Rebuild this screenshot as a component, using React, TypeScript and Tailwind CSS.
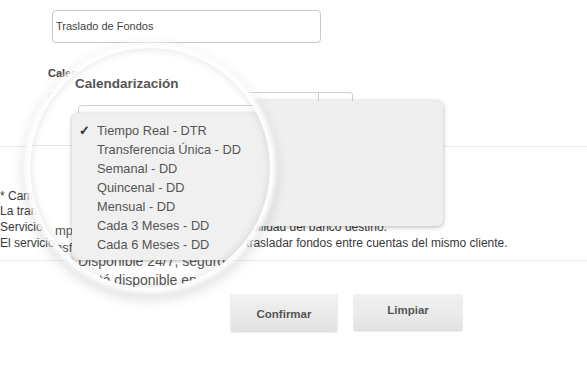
import React from 'react';

const options = [
  'Tiempo Real - DTR',
  'Transferencia Única - DD',
  'Semanal - DD',
  'Quincenal - DD',
  'Mensual - DD',
  'Cada 3 Meses - DD',
  'Cada 6 Meses - DD',
];

function Magnifier() {
  return (
    <div className="absolute left-[30px] top-[48px] h-[240px] w-[240px] overflow-hidden rounded-full bg-white shadow-[0_0_4px_6px_rgba(255,255,255,0.95),0_5px_14px_6px_rgba(0,0,0,0.14)]">
      <div className="absolute left-[45px] top-[26px] text-[13.5px] font-bold text-[#555]">Calendarización</div>
      <div className="absolute left-[48px] top-[57px] h-[30px] w-[260px] rounded-[4px] border border-[#d0d0d0] bg-white" />
      <div className="absolute left-0 top-[97px] w-full border-t border-[#e6e6e6]" />
      <div className="absolute left-[25px] top-[174px] text-[13px] leading-[17px] text-[#555]">
        <div>mpensado</div>
        <div>nsferencia</div>
      </div>
      <div className="absolute left-0 top-[210px] w-full border-t border-[#e6e6e6]" />
      <div className="absolute left-[48px] top-[204px] text-[14px] leading-[19px] text-[#555]">
        <div>Disponible 24/7, seguro</div>
        <div className="pl-[6px]">está disponible en</div>
      </div>
      <div className="absolute left-[42px] top-[65px] w-[260px] rounded-[6px] bg-[#f0f0f0] pb-[6px] pt-[8px] shadow-[0_1px_4px_rgba(0,0,0,0.3)]">
        {options.map((opt, i) => (
          <div key={opt} className="flex h-[19px] items-center text-[12.8px] text-[#555]">
            <span className="w-[25px] pl-[7px] text-[13px] font-bold text-[#333]">{i === 0 ? '✓' : ''}</span>
            <span>{opt}</span>
          </div>
        ))}
      </div>
      <div className="pointer-events-none absolute inset-0 rounded-full shadow-[inset_0_0_10px_rgba(0,0,0,0.12)]" />
    </div>
  );
}

export default function App() {
  return (
    <div
      className="relative h-[380px] w-[587px] overflow-hidden bg-white text-[#333]"
      style={{ fontFamily: '"Liberation Sans", Arial, sans-serif' }}
    >
      <div className="pl-[52px] pt-[10px]">
        <div className="flex h-[33px] w-[269px] items-center rounded-[4px] border border-[#c8c8c8] pl-[3px] text-[11px] text-[#444]">
          Traslado de Fondos
        </div>
      </div>

      <div className="ml-[48px] mt-[22px] text-[11px] font-bold text-[#444]">Calendarización</div>

      <div className="ml-[48px] mt-[10px] flex h-[22px] w-[305px] rounded-[3px] border border-[#cfcfcf]">
        <div className="flex-1" />
        <div className="w-[34px] border-l border-[#cfcfcf]" />
      </div>

      <div className="mt-[32px] border-t border-[#ececec]" />

      <div className="mt-[42px] text-[12px] leading-[15.7px] text-[#3a3a3a]">
        <div>* Campos obligatorios.</div>
        <div>La transferencia se realiza en línea.</div>
        <div>Servicio compensado sujeto a horario y disponibilidad del banco destino.</div>
        <div>El servicio de Traslado de Fondos les permite trasladar fondos entre cuentas del mismo cliente.</div>
      </div>

      <div className="mt-[9px] border-t border-[#ececec]" />

      <div className="ml-[231px] mt-[33px] flex items-start gap-[17px]">
        <button
          type="button"
          className="h-[37px] w-[106px] bg-gradient-to-b from-[#f2f2f2] to-[#e3e3e3] pt-[3px] text-[11.5px] font-bold text-[#555] shadow-[0_1px_2px_rgba(0,0,0,0.2)]"
        >
          Confirmar
        </button>
        <button
          type="button"
          className="h-[36px] w-[108px] bg-gradient-to-b from-[#f2f2f2] to-[#e3e3e3] pb-[3px] text-[11.5px] font-bold text-[#555] shadow-[0_1px_2px_rgba(0,0,0,0.2)]"
        >
          Limpiar
        </button>
      </div>

      <div className="absolute left-[60px] top-[101px] h-[125px] w-[383px] rounded-[6px] bg-[#efefef] shadow-[0_1px_5px_rgba(0,0,0,0.3)]" />

      <Magnifier />
    </div>
  );
}
